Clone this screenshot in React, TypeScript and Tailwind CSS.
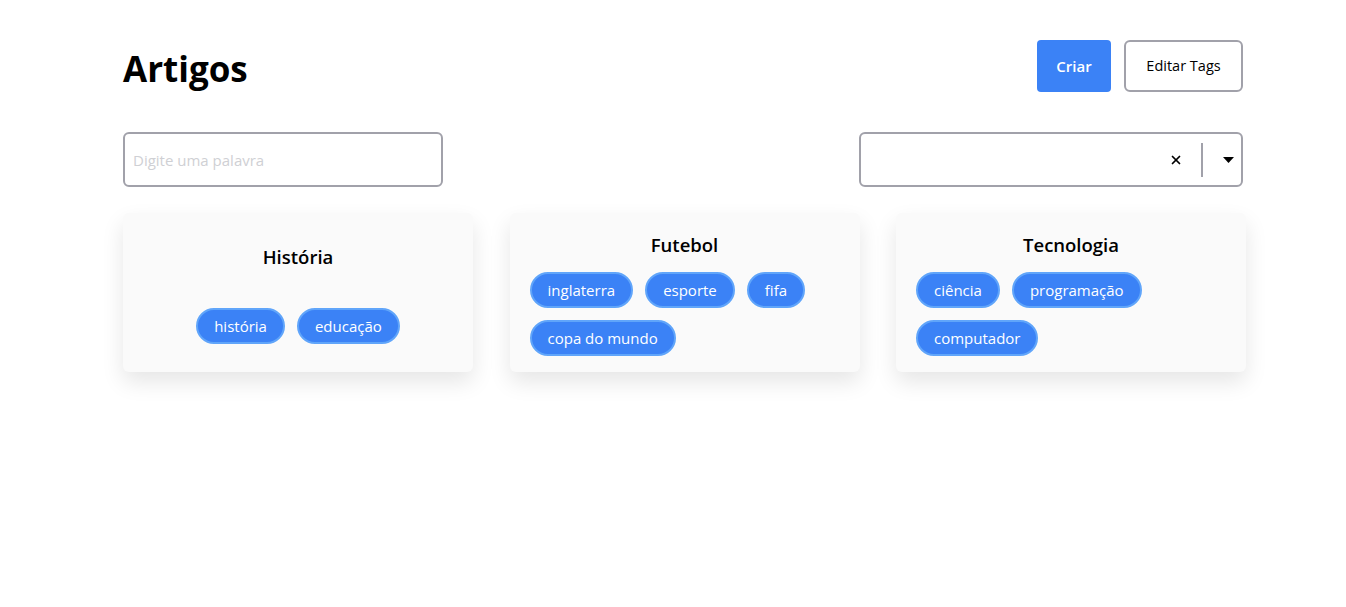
import { X } from "lucide-react";

// Artigos list: header actions, filters, and article cards with tag pills.

interface Article {
  title: string;
  tags: string[];
}

const articles: Article[] = [
  { title: "História", tags: ["história", "educação"] },
  { title: "Futebol", tags: ["inglaterra", "esporte", "fifa", "copa do mundo"] },
  { title: "Tecnologia", tags: ["ciência", "programação", "computador"] },
];

function Tag({ label }: { label: string }) {
  return (
    <span className="inline-flex items-center h-9 px-4 rounded-full bg-[#3b82f6] border-2 border-[#60a5fa] text-white text-[15px] leading-6">
      {label}
    </span>
  );
}

function ArticleCard({ a }: { a: Article }) {
  return (
    <div className="flex flex-col items-center justify-around gap-[13px] pt-[18px] pb-4 px-5 rounded-md bg-[#fafafa] shadow-[0_10px_22px_rgba(0,0,0,0.10)]">
      <h2 className="text-[18.5px] leading-7 font-semibold text-black">{a.title}</h2>
      <div className="flex flex-wrap gap-3 max-w-full">
        {a.tags.map((t) => <Tag key={t} label={t} />)}
      </div>
    </div>
  );
}

export default function App() {
  return (
    <div className="min-h-screen bg-white font-['Open_Sans',sans-serif] text-black">
      <div className="ml-[123px] w-[1123px] pt-10">
        <div className="flex items-center justify-between h-[52px] pr-[3px]">
          <h1 className="text-[35px] font-bold leading-none mt-[4px]">Artigos</h1>
          <div className="flex items-center gap-[13px]">
            <button className="h-[52px] w-[74px] rounded bg-[#3b82f6] text-white text-[15px] font-semibold">Criar</button>
            <button className="h-[52px] w-[119px] rounded-md border-2 border-[#a1a1aa] bg-white text-[14.5px]">Editar Tags</button>
          </div>
        </div>

        <div className="flex items-center justify-between mt-10 pr-[3px]">
          <input
            placeholder="Digite uma palavra"
            className="w-[320px] h-[55px] rounded-md border-2 border-[#a1a1aa] px-2 text-[15px] placeholder:text-[#cfd0d4] outline-none"
          />
          <div className="flex items-center w-[384px] h-[55px] rounded-md border-2 border-[#a1a1aa] bg-white">
            <div className="flex-1" />
            <button className="flex items-center justify-center w-[30px] h-full text-black">
              <X className="w-[14px] h-[14px]" strokeWidth={3} />
            </button>
            <span className="w-[2px] h-[34px] bg-[#a1a1aa] ml-[10px] mr-[15px]" />
            <button className="flex items-center justify-center w-[20px] h-full mr-[3px]">
              <svg width="11" height="6" viewBox="0 0 11 6"><path d="M0 0h11L5.5 6z" fill="#000" /></svg>
            </button>
          </div>
        </div>

        <div className="grid grid-cols-[350px_350px_350px] gap-x-[36.5px] mt-[26px]">
          {articles.map((a) => <ArticleCard key={a.title} a={a} />)}
        </div>
      </div>
    </div>
  );
}
